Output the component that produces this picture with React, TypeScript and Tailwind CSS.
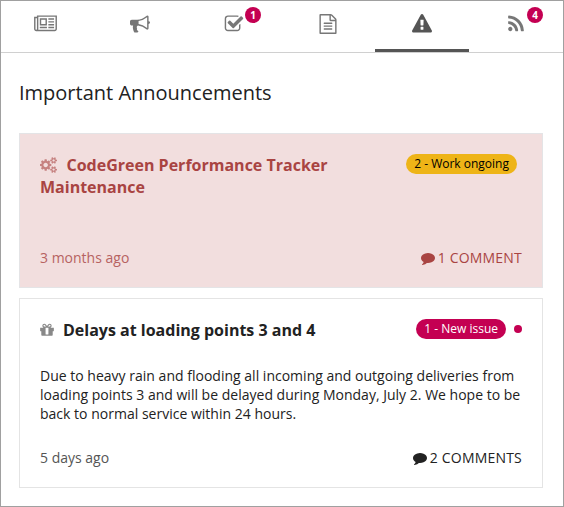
import type { ReactNode } from "react";

type IconProps = { d: string; w?: number; x?: number; className: string };

function Icon({ d, w = 1792, x = 0, className }: IconProps) {
  return (
    <svg viewBox={`${x} 0 ${w} 1792`} className={className} fill="currentColor" aria-hidden="true">
      <path d={d} />
    </svg>
  );
}

const NEWSPAPER =
  "M1024 512h-384v384h384v-384zm128 640v128h-640v-128h640zm0-768v640h-640v-640h640zm640 768v128h-512v-128h512zm0-256v128h-512v-128h512zm0-256v128h-512v-128h512zm0-256v128h-512v-128h512zm-1536 960v-960h-128v960q0 26 19 45t45 19 45-19 19-45zm1664 0v-1088h-1536v1088q0 33-11 64h1483q26 0 45-19t19-45zm128-1216v1216q0 80-56 136t-136 56h-1664q-80 0-136-56t-56-136v-1088h256v-128h1792z";
const BULLHORN =
  "M1664 640q53 0 90.5 37.5t37.5 90.5-37.5 90.5-90.5 37.5v384q0 52-38 90t-90 38q-417-347-812-380-58 19-91 66t-31 100.5 40 92.5q-20 33-23 65.5t6 58 33.5 55 48 50 61.5 50.5q-29 58-111.5 83t-168.5 11.5-132-55.5q-7-23-29.5-87.5t-32-94.5-23-89-15-101 3.5-98.5 22-110.5h-122q-66 0-113-47t-47-113v-192q0-66 47-113t113-47h480q435 0 896-384 52 0 90 38t38 90v384zm-128 604v-954q-394 302-768 343v270q377 42 768 341z";
const CHECK =
  "M1472 930v318q0 119-84.5 203.5t-203.5 84.5h-832q-119 0-203.5-84.5t-84.5-203.5v-832q0-119 84.5-203.5t203.5-84.5h832q63 0 117 25 15 7 18 23 3 17-9 29l-49 49q-10 10-23 10-3 0-9-2-23-6-45-6h-832q-66 0-113 47t-47 113v832q0 66 47 113t113 47h832q66 0 113-47t47-113v-254q0-13 9-22l64-64q10-10 23-10 6 0 12 3 20 8 20 29zm231-489l-814 814q-24 24-57 24t-57-24l-430-430q-24-24-24-57t24-57l110-110q24-24 57-24t57 24l263 263 647-647q24-24 57-24t57 24l110 110q24 24 24 57t-24 57z";
const FILE =
  "M1596 380q28 28 48 76t20 88v1152q0 40-28 68t-68 28h-1344q-40 0-68-28t-28-68v-1600q0-40 28-68t68-28h896q40 0 88 20t76 48zm-444-244v376h376q-10-29-22-41l-313-313q-12-12-41-22zm384 1528v-1024h-416q-40 0-68-28t-28-68v-416h-768v1536h1280zm-1024-864q0-14 9-23t23-9h704q14 0 23 9t9 23v64q0 14-9 23t-23 9h-704q-14 0-23-9t-9-23v-64zm736 224q14 0 23 9t9 23v64q0 14-9 23t-23 9h-704q-14 0-23-9t-9-23v-64q0-14 9-23t23-9h704zm0 256q14 0 23 9t9 23v64q0 14-9 23t-23 9h-704q-14 0-23-9t-9-23v-64q0-14 9-23t23-9h704z";
const WARNING =
  "M1024 1375v-190q0-14-9.5-23.5t-22.5-9.5h-192q-13 0-22.5 9.5t-9.5 23.5v190q0 14 9.5 23.5t22.5 9.5h192q13 0 22.5-9.5t9.5-23.5zm-2-374l18-459q0-12-10-19-13-11-24-11h-220q-11 0-24 11-10 7-10 21l17 457q0 10 10 16.5t24 6.5h185q14 0 23.5-6.5t10.5-16.5zm-14-934l768 1408q35 63-2 126-17 29-46.5 46t-63.5 17h-1536q-34 0-63.5-17t-46.5-46q-37-63-2-126l768-1408q17-31 47-49t65-18 65 18 47 49z";
const RSS =
  "M576 1344q0 80-56 136t-136 56-136-56-56-136 56-136 136-56 136 56 56 136zm512 123q2 28-17 48-18 21-47 21h-135q-25 0-43-16.5t-20-41.5q-22-229-184.5-391.5t-391.5-184.5q-25-2-41.5-20t-16.5-43v-135q0-29 21-47 17-17 43-17h5q160 13 306 80.5t259 181.5q114 113 181.5 259t80.5 306zm512 2q2 27-18 47-18 20-46 20h-143q-26 0-44.5-17.5t-19.5-42.5q-12-215-101-408.5t-231.5-336-336-231.5-408.5-102q-25-1-42.5-19.5t-17.5-43.5v-143q0-28 20-46 18-18 44-18h3q262 13 501.5 120t425.5 294q187 186 294 425.5t120 501.5z";
const GIFT =
  "M1056 1356v-716h-320v716q0 25 18 38.5t46 13.5h192q28 0 46-13.5t18-38.5zm-456-844h195l-126-161q-26-31-69-31-40 0-68 28t-28 68 28 68 68 28zm688-96q0-40-28-68t-68-28q-43 0-69 31l-125 161h194q40 0 68-28t28-68zm376 256v320q0 14-9 23t-23 9h-96v416q0 40-28 68t-68 28h-1088q-40 0-68-28t-28-68v-416h-96q-14 0-23-9t-9-23v-320q0-14 9-23t23-9h440q-93 0-158.5-65.5t-65.5-158.5 65.5-158.5 158.5-65.5q107 0 168 77l128 165 128-165q61-77 168-77 93 0 158.5 65.5t65.5 158.5-65.5 158.5-158.5 65.5h440q14 0 23 9t9 23z";
const COMMENT =
  "M1792 896q0 174-120 321.5t-326 233-450 85.5q-70 0-145-8-198 175-460 242-49 14-114 22-17 2-30.5-9t-17.5-29v-1q-3-4-.5-12t2-10 4.5-9.5l6-9 7-8.5 8-9q7-8 31-34.5t34.5-38 31-39.5 32.5-51 27-59 26-76q-157-89-247.5-220t-90.5-281q0-130 71-248.5t191-204.5 286-136.5 348-50.5q244 0 450 85.5t326 233 120 321.5z";
const COGS =
  "M832 896q0-106-75-181t-181-75-181 75-75 181 75 181 181 75 181-75 75-181zm768 512q0-52-38-90t-90-38-90 38-38 90q0 53 37.5 90.5t90.5 37.5 90.5-37.5 37.5-90.5zm0-1024q0-52-38-90t-90-38-90 38-38 90q0 53 37.5 90.5t90.5 37.5 90.5-37.5 37.5-90.5zm-384 421v185q0 10-7 19.5t-16 10.5l-155 24q-11 35-32 76 34 48 90 115 7 11 7 20 0 12-7 19-23 30-82.5 89.5t-78.5 59.5q-11 0-21-7l-115-90q-37 19-77 31-11 108-23 155-7 24-30 24h-186q-11 0-20-7.5t-10-17.5l-23-153q-34-10-75-31l-118 89q-7 7-20 7-11 0-21-8-144-133-144-160 0-9 7-19 10-14 41-53t47-61q-23-44-35-82l-152-24q-10-1-17-9.5t-7-19.5v-185q0-10 7-19.5t16-10.5l155-24q11-35 32-76-34-48-90-115-7-11-7-20 0-12 7-20 22-30 82-89t79-59q11 0 21 7l115 90q34-18 77-32 11-108 23-154 7-24 30-24h186q11 0 20 7.5t10 17.5l23 153q34 10 75 31l118-89q8-7 20-7 11 0 21 8 144 133 144 160 0 8-7 19-12 16-42 54t-45 60q23 48 34 82l152 23q10 2 17 10.5t7 19.5zm640 533v140q0 16-149 31-12 27-30 52 51 113 51 138 0 4-4 7-122 71-124 71-8 0-46-47t-52-68q-20 2-30 2t-30-2q-14 21-52 68t-46 47q-2 0-124-71-4-3-4-7 0-25 51-138-18-25-30-52-149-15-149-31v-140q0-16 149-31 13-29 30-52-51-113-51-138 0-4 4-7 4-2 35-20t59-34 30-16q8 0 46 46.5t52 67.5q20-2 30-2t30 2q51-71 92-112l6-2q4 0 124 70 4 3 4 7 0 25-51 138 17 23 30 52 149 15 149 31zm0-1024v140q0 16-149 31-12 27-30 52 51 113 51 138 0 4-4 7-122 71-124 71-8 0-46-47t-52-68q-20 2-30 2t-30-2q-14 21-52 68t-46 47q-2 0-124-71-4-3-4-7 0-25 51-138-18-25-30-52-149-15-149-31v-140q0-16 149-31 13-29 30-52-51-113-51-138 0-4 4-7 4-2 35-20t59-34 30-16q8 0 46 46.5t52 67.5q20-2 30-2t30 2q51-71 92-112l6-2q4 0 124 70 4 3 4 7 0 25-51 138 17 23 30 52 149 15 149 31z";

function Tab({ children, badge, active }: { children: ReactNode; badge?: string; active?: boolean }) {
  return (
    <button
      className={`flex h-[51px] w-[94px] shrink-0 justify-center border-b-3 pt-[13px] first:w-[92px] first:pr-[3px] ${
        active ? "border-[#555555] text-[#555555]" : "border-transparent text-[#777777]"
      }`}
    >
      <span className="relative block h-5">
        {children}
        {badge && (
          <span className="absolute -top-[7px] left-[21px] flex size-4 items-center justify-center rounded-full bg-[#c40052] text-[10px] leading-none font-bold text-white">
            {badge}
          </span>
        )}
      </span>
    </button>
  );
}

function Comments({ label }: { label: string }) {
  return (
    <span className="flex items-center gap-[3px] font-medium">
      <Icon d={COMMENT} className="size-[14px]" />
      <span className="tracking-[0.2px]">{label}</span>
    </span>
  );
}

export default function App() {
  return (
    <div className="flex h-[507px] w-[564px] flex-col border border-[#a0a0a0] bg-white font-['Open_Sans',sans-serif] text-[#222222]">
      <nav className="flex h-[52px] shrink-0 border-b border-[#d0d0d0]">
        <Tab><Icon d={NEWSPAPER} w={2048} className="h-5 w-[23px]" /></Tab>
        <Tab><Icon d={BULLHORN} className="size-5" /></Tab>
        <Tab badge="1"><Icon d={CHECK} className="size-5" /></Tab>
        <Tab><Icon d={FILE} className="size-5" /></Tab>
        <Tab active><Icon d={WARNING} className="size-5" /></Tab>
        <Tab badge="4"><Icon d={RSS} className="size-5" /></Tab>
      </nav>
      <main className="flex flex-col pt-[26px] pr-5 pl-[18px]">
        <h1 className="h-[54px] text-[20px] leading-7">Important Announcements</h1>

        <article className="flex h-[155px] flex-col justify-between border border-[#e4e4e6] bg-[#f2dede] px-5 pt-5 pb-[18px] text-[#a94442]">
          <div className="flex items-start justify-between">
            <h2 className="w-[320px] text-[16px] leading-[22px] font-bold">
              <Icon d={COGS} w={1920} x={-64} className="mr-[9.5px] inline-block h-4 w-[17px] align-[-2px] opacity-60" />
              CodeGreen Performance Tracker Maintenance
            </h2>
            <span className="mr-[5px] flex h-5 items-center rounded-full bg-[#eeb417] px-2 text-[12px] text-black">
              2 - Work ongoing
            </span>
          </div>
          <footer className="flex items-center justify-between text-[14px] leading-[22px]">
            <time className="opacity-80">3 months ago</time>
            <Comments label="1 COMMENT" />
          </footer>
        </article>

        <article className="mt-[10px] flex h-[190px] flex-col border border-[#e4e4e4] bg-white px-5 pt-5 pb-[18px]">
          <div className="flex items-start justify-between">
            <h2 className="text-[16px] leading-[22px] font-bold">
              <Icon d={GIFT} w={1536} x={128} className="mr-[9px] inline-block h-4 w-[14px] align-[-2px] text-[#888888]" />
              Delays at loading points 3 and 4
            </h2>
            <div className="flex items-center gap-2">
              <span className="flex h-5 items-center rounded-full bg-[#c40052] px-2 text-[12px] text-white">
                1 - New issue
              </span>
              <span className="size-2 rounded-full bg-[#c40052]" />
            </div>
          </div>
          <p className="mt-[25px] text-[14px] leading-[19px] tracking-[0.01px] whitespace-nowrap">
            Due to heavy rain and flooding all incoming and outgoing deliveries from
            <br />
            loading points 3 and will be delayed during Monday, July 2. We hope to be
            <br />
            back to normal service within 24 hours.
          </p>
          <footer className="mt-auto flex items-center justify-between text-[14px] leading-[22px]">
            <time className="text-[#555555]">5 days ago</time>
            <Comments label="2 COMMENTS" />
          </footer>
        </article>
      </main>
    </div>
  );
}
